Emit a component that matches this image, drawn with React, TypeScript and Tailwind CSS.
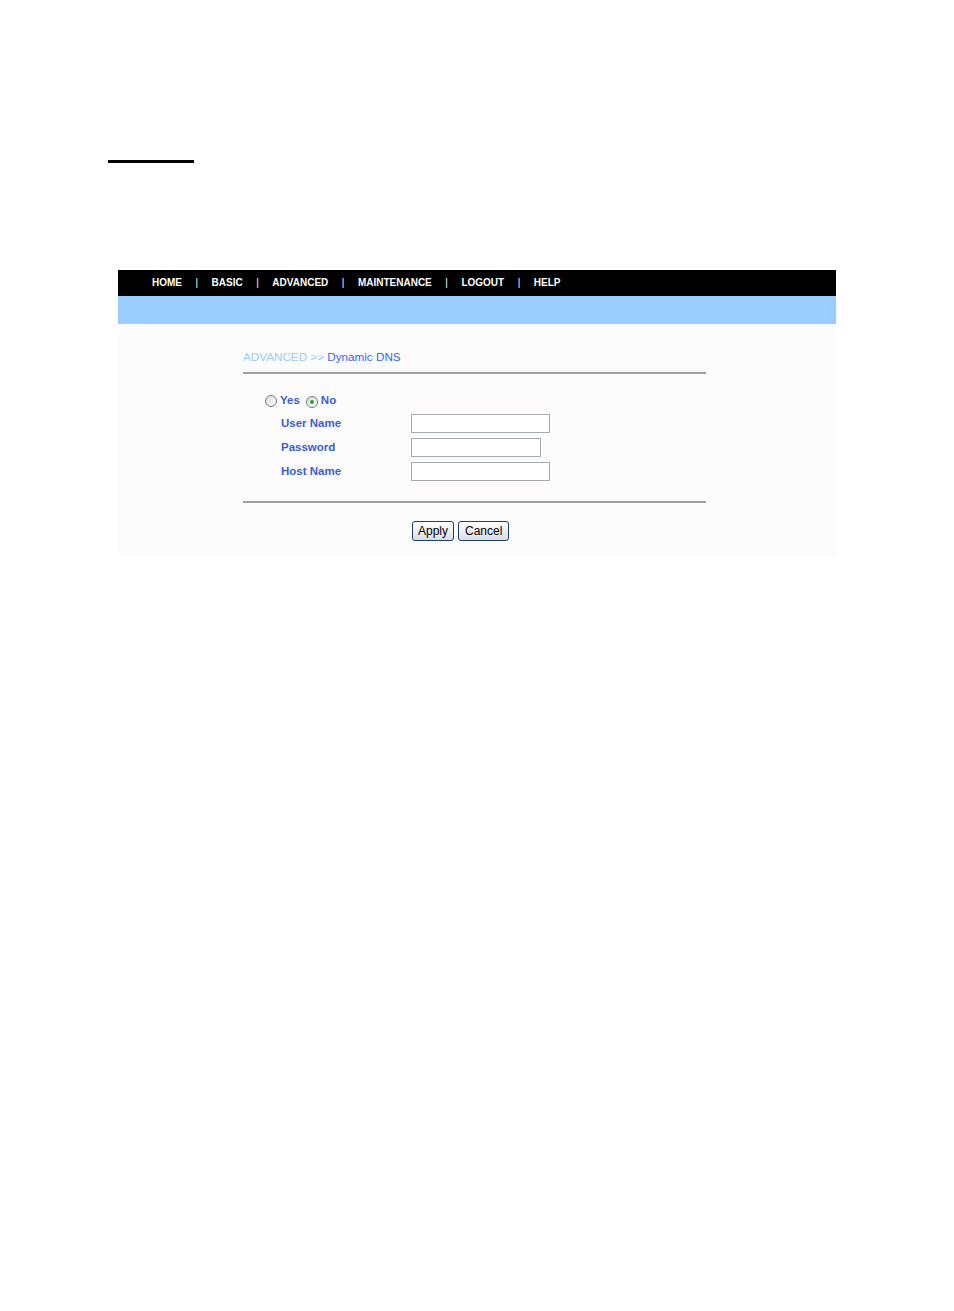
import React, { useState } from 'react';

const navItems = ['HOME', 'BASIC', 'ADVANCED', 'MAINTENANCE', 'LOGOUT', 'HELP'];

const Radio: React.FC<{ checked: boolean; onClick: () => void }> = ({ checked, onClick }) => (
  <span
    onClick={onClick}
    className="inline-flex h-[12px] w-[12px] items-center justify-center rounded-full border border-[#6b7a8c] bg-gradient-to-br from-[#dcdcd6] to-white"
  >
    {checked && <span className="h-[4px] w-[4px] rounded-full bg-[#2ca02c]" />}
  </span>
);

const Field: React.FC<{ label: string; width: string; type?: string }> = ({ label, width, type = 'text' }) => (
  <div className="flex h-[24px] items-center">
    <span className="w-[130px] pl-[38px] pt-[2px] text-[11.5px] font-bold text-[#3a5cd6] box-content">{label}</span>
    <input
      type={type}
      className={`${width} h-[19px] border border-[#a5acb2] bg-white outline-none`}
    />
  </div>
);

export default function App() {
  const [enabled, setEnabled] = useState(false);

  return (
    <div className="min-h-[1311px] w-[954px] bg-white font-['Liberation_Sans',Arial,sans-serif]">
      <div className="pt-[160px]">
        <div className="ml-[108px] h-[3px] w-[86px] bg-black" />
      </div>

      <div className="ml-[118px] mt-[107px] w-[718px]">
        {/* top navigation */}
        <div className="flex h-[26px] items-center bg-black pb-[1px] pl-[34px] text-[10px] font-bold text-white">
          {navItems.map((item, i) => (
            <React.Fragment key={item}>
              {i > 0 && <span className="px-[13.5px] font-normal text-white">|</span>}
              <span>{item}</span>
            </React.Fragment>
          ))}
        </div>
        <div className="h-[28px] bg-[#99ccff]" />

        <div className="h-[231px] bg-[#fcfcfc] pl-[125px] pt-[26px]">
          <div className="w-[463px]">
            <div className="text-[11.7px] leading-[14px]">
              <span className="text-[#99ccff]">ADVANCED &gt;&gt; </span>
              <span className="text-[#3366ff]">Dynamic DNS</span>
            </div>
            <div className="mt-[8px] h-[2px] bg-[#a0a0a0]" />

            <div className="pt-[19px]">
              <div className="flex h-[16px] items-center pl-[22px] text-[11.5px] font-bold text-[#3a5cd6]">
                <Radio checked={enabled} onClick={() => setEnabled(true)} />
                <span className="ml-[3px]">Yes</span>
                <span className="ml-[6px]">
                  <Radio checked={!enabled} onClick={() => setEnabled(false)} />
                </span>
                <span className="ml-[3px]">No</span>
              </div>
              <div className="mt-[2px]">
                <Field label="User Name" width="w-[139px]" />
                <Field label="Password" width="w-[130px]" type="password" />
                <Field label="Host Name" width="w-[139px]" />
              </div>
            </div>

            <div className="mt-[18px] h-[2px] bg-[#a0a0a0]" />

            <div className="mt-[18px] flex gap-[4px] pl-[169px]">
              <button className="h-[20px] rounded-[3px] border border-[#1c3f6e] bg-gradient-to-b from-white to-[#dcdde6] px-[5px] text-[12px] leading-none text-black">
                Apply
              </button>
              <button className="h-[20px] rounded-[3px] border border-[#1c3f6e] bg-gradient-to-b from-white to-[#dcdde6] px-[6px] text-[12px] leading-none text-black">
                Cancel
              </button>
            </div>
          </div>
        </div>
      </div>
    </div>
  );
}
